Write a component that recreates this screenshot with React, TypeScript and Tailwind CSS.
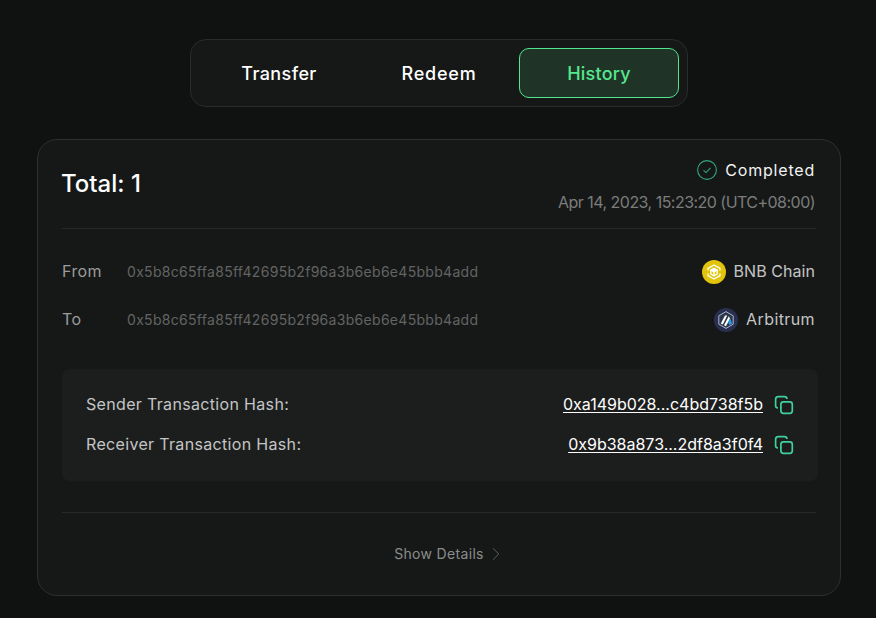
import { ChevronRight } from 'lucide-react';

const font = { fontFamily: 'Inter, sans-serif' };

const CopyIcon = () => (
  <svg width="20" height="20" viewBox="0 0 20 20" fill="none" stroke="#3fd09b" strokeWidth="1.7" className="shrink-0">
    <rect x="6.9" y="6.9" width="11.4" height="11.4" rx="2.5" />
    <path d="M4 13 A2.5 2.5 0 0 1 1.6 10.5 V4.5 A2.8 2.8 0 0 1 4.4 1.7 H10.5 A2.5 2.5 0 0 1 13 4" />
  </svg>
);

const BnbIcon = () => (
  <svg width="24" height="24" viewBox="0 0 24 24" className="shrink-0">
    <circle cx="12" cy="12" r="12" fill="#e2c40b" />
    <g fill="none" stroke="#fff" strokeWidth="1.3" strokeLinejoin="round">
      <path d="M6 10.5 V8.4 L12 5 L18 8.4 V10.5" />
      <path d="M6 13.5 V15.6 L12 19 L18 15.6 V13.5" />
      <path d="M8.8 10 L12 8.2 L15.2 10 L12 11.9 Z" fill="#fff" />
      <path d="M8.8 10 V14 L12 15.9 L15.2 14 V10 M12 11.9 V15.9" />
    </g>
  </svg>
);

const ArbIcon = () => (
  <svg width="24" height="24" viewBox="0 0 24 24" className="shrink-0">
    <circle cx="12" cy="12" r="12" fill="#2a2f52" />
    <path d="M12 3.6 L19.2 7.8 V16.2 L12 20.4 L4.8 16.2 V7.8 Z" fill="#2d374b" stroke="#a9b6cf" strokeWidth="1" strokeLinejoin="round" />
    <path d="M6.8 15.4 L11 7.6 H13.2 L8.8 16.6 Z M10 17.2 L14.8 8.2 L16 10.4 L12 18.2 Z" fill="#fff" />
    <path d="M14.2 14.4 L16.2 10.6 L18 15.4 L15.6 17 Z" fill="#28a0f0" />
  </svg>
);

const Route = ({ label, chain, icon, chainClass }: { label: string; chain: string; icon: React.ReactNode; chainClass: string }) => (
  <div className="flex h-6 items-center">
    <span className="w-[65px] pb-[2px] text-[16px] tracking-[0.4px] text-[#9a9c9b]">{label}</span>
    <span className="pb-px text-[14px] tracking-[0.3px] text-[#626463]">0x5b8c65ffa85ff42695b2f96a3b6eb6e45bbb4add</span>
    <div className="ml-auto flex items-center gap-2">
      {icon}
      <span className={`mr-px pb-[2px] text-[16px] text-[#c4c5c5] ${chainClass}`}>{chain}</span>
    </div>
  </div>
);

const HashRow = ({ label, hash }: { label: string; hash: string }) => (
  <div className="flex h-6 items-center justify-between">
    <span className="pb-[2px] text-[16px] tracking-[0.33px] text-[#c4c5c5]">{label}</span>
    <div className="flex items-center gap-[11px]">
      <span className="pb-[2px] text-[16px] text-white underline underline-offset-2">{hash}</span>
      <CopyIcon />
    </div>
  </div>
);

export default function App() {
  return (
    <div className="min-h-screen bg-[#101111] pl-[2px] pt-[39px]" style={font}>
      <div className="mx-auto flex w-[498px] rounded-[16px] border border-[#2a2b2b] bg-[#161817] p-2">
        <button className="h-[50px] w-40 text-[18px] font-medium tracking-[0.4px] text-white">Transfer</button>
        <button className="h-[50px] w-40 text-[18px] font-medium tracking-[0.8px] text-white">Redeem</button>
        <button className="h-[50px] w-40 rounded-[10px] border border-[#4fe88f] bg-[#1f3327] text-[18px] font-medium tracking-[0.2px] text-[#56e88f]">History</button>
      </div>

      <div className="mx-auto mt-8 h-[457px] w-[804px] rounded-[20px] border border-[#2e2f2f] bg-[#161817] px-6">
        <div className="flex h-[89px] items-center justify-between border-b border-[#272928]">
          <h1 className="-ml-px text-[24px] font-medium text-white">Total: 1</h1>
          <div className="mt-[3px] flex flex-col items-end gap-[8px]">
            <div className="mr-px flex items-center gap-2">
              <svg width="20" height="20" viewBox="0 0 20 20" fill="none" stroke="#2fa880" strokeWidth="1.1">
                <circle cx="10" cy="10" r="9.4" />
                <path d="M6.5 10.3 L9 12.6 L13.5 7.8" />
              </svg>
              <span className="text-[16px] tracking-[0.8px] text-[#f2f2f2]">Completed</span>
            </div>
            <span className="mr-px text-[16px] tracking-[-0.53px] text-[#7b7d7c]">Apr 14, 2023, 15:23:20 (UTC+08:00)</span>
          </div>
        </div>

        <div className="mt-[31px] flex flex-col gap-6">
          <Route label="From" chain="BNB Chain" icon={<BnbIcon />} chainClass="tracking-[0.05px]" />
          <Route label="To" chain="Arbitrum" icon={<ArbIcon />} chainClass="tracking-[0.4px]" />
        </div>

        <div className="mt-[37px] flex h-28 w-[756px] flex-col justify-center gap-4 rounded-lg bg-[#1c1e1d] pl-6 pr-6">
          <HashRow label="Sender Transaction Hash:" hash="0xa149b028...c4bd738f5b" />
          <HashRow label="Receiver Transaction Hash:" hash="0x9b38a873...2df8a3f0f4" />
        </div>

        <div className="mt-[31px] flex h-[82px] items-center justify-center gap-px border-t border-[#272928]">
          <span className="text-[14px] tracking-[0.33px] text-[#8a8c8b]">Show Details</span>
          <ChevronRight size={22} strokeWidth={0.9} className="-mr-[23px] text-[#6a6c6b]" />
        </div>
      </div>
    </div>
  );
}
